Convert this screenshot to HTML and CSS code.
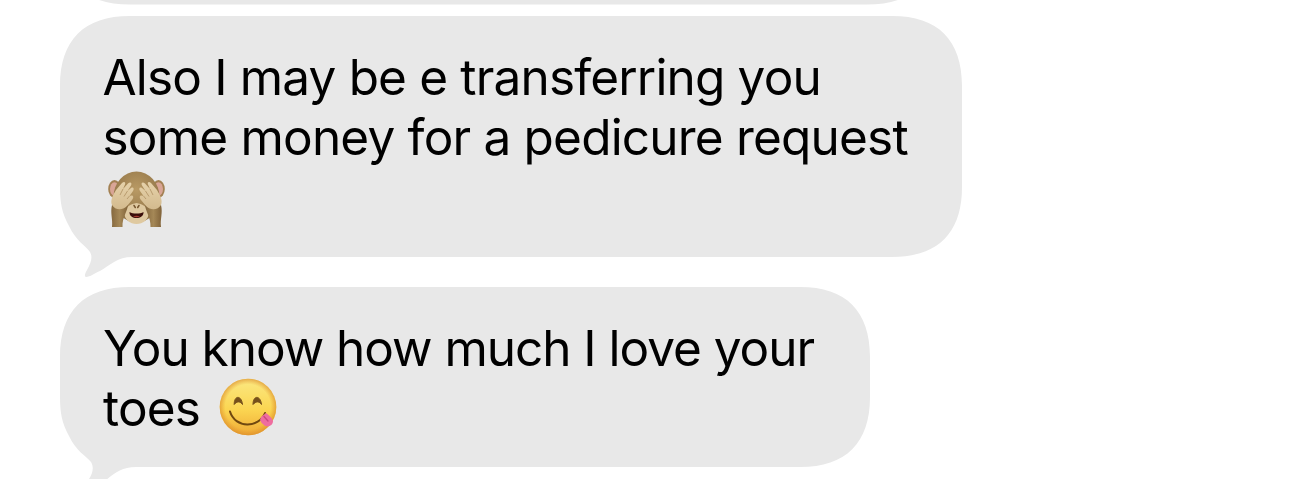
FILE: index.html
```
<!DOCTYPE html>
<html lang="en">
<head>
    <meta charset="utf-8">
    <title>Messages</title>
    <link rel="stylesheet" href="styles.css">
</head>
<body>
    <div class="chat">
        <!-- end of the message above -->
        <div class="bubble previous">
            <svg class="shape" width="877" height="5" viewBox="0 0 877 5">
                <path d="M0 -65 C0 -19 24 4.6 70 4.6 H807 C853 4.6 877 -19 877 -65 Z"/>
            </svg>
        </div>

        <div class="bubble first">
            <svg class="shape" width="902" height="262" viewBox="0 0 902 262">
                <path d="M0 70 C0 24 24 0 70 0 H832 C878 0 902 24 902 70 V171 C902 217 878 241 832 241 H72 C58 241 50 249 40 255 C35 257 30 261 26 261 C24 261 25 257 27 254 C31 247 33 241 30 236 C26 230 16 225 9 210 C2 197 0 187 0 171 Z"/>
            </svg>
            <p class="line one">Also I may be e transferring you</p>
            <p class="line two">some money for a pedicure request</p>
            <p class="line">
                <svg class="monkey" width="58" height="58" viewBox="0 0 58 58">
                    <defs>
                        <radialGradient id="fur" cx="50%" cy="35%" r="65%">
                            <stop offset="0" stop-color="#b99a64"/>
                            <stop offset="1" stop-color="#8d7044"/>
                        </radialGradient>
                        <linearGradient id="hand" x1="0" y1="0" x2="0" y2="1">
                            <stop offset="0" stop-color="#e6d2aa"/>
                            <stop offset="1" stop-color="#d3ba8e"/>
                        </linearGradient>
                        <linearGradient id="arm" x1="0" y1="0" x2="1" y2="0">
                            <stop offset="0" stop-color="#85683e"/>
                            <stop offset=".5" stop-color="#a58857"/>
                            <stop offset="1" stop-color="#806239"/>
                        </linearGradient>
                    </defs>
                    <ellipse cx="6.5" cy="18" rx="6.3" ry="9" fill="#a38153"/>
                    <ellipse cx="6.5" cy="18" rx="4.5" ry="6.8" fill="#d9a596"/>
                    <ellipse cx="50.5" cy="18" rx="6.3" ry="9" fill="#a38153"/>
                    <ellipse cx="50.5" cy="18" rx="4.5" ry="6.8" fill="#d9a596"/>
                    <ellipse cx="28.5" cy="26" rx="23" ry="25.5" fill="url(#fur)"/>
                    <path d="M16 42 C18 35 23 33 28.5 32 C34 33 39 35 41 42 C40 49 35 53 28.5 53 C22 53 17 49 16 42Z" fill="#dfc9a0"/>
                    <path d="M4 56 C5 48 2 42 4 34 L20 33 C20 40 14 46 14.5 56Z" fill="url(#arm)"/>
                    <path d="M53 56 C52 48 55 42 53 34 L37 33 C37 40 43 46 42.5 56Z" fill="url(#arm)"/>
                    <path id="palm" d="M4 34 C2 29 5 24 8 19 L14 12 C16 10 18 11 17 13.5 L15 18 L20 12.5 C22 10.5 24.5 11.5 23 14.5 L19.5 20 L23 17 C25.5 15.5 26.5 18 25 20 L21.5 25 L23.5 24.5 C26 24.5 25.5 27 24 29 L19 35 C14 40 7 39 4 34Z" fill="url(#hand)"/>
                    <use href="#palm" transform="translate(57 0) scale(-1 1)"/>
                    <path d="M12 24 L15 18 M16 25.5 L19.5 20 M19 28 L21.5 25 M45 24 L42 18 M41 25.5 L37.5 20 M38 28 L35.5 25" stroke="#b99c6f" stroke-width="1"/>
                    <path d="M26 34.5 L27.3 36.5 M31 34.5 L29.7 36.5" stroke="#76562e" stroke-width="1.5" stroke-linecap="round"/>
                    <path d="M21.5 41 C25 43 32 43 35.5 41 C36 49 21 49 21.5 41Z" fill="#3b0e0a"/>
                    <path d="M25 45.5 Q28.5 44 32 45.5 Q28.5 47 25 45.5Z" fill="#a63b31"/>
                </svg>
            </p>
        </div>

        <div class="bubble second">
            <svg class="shape" width="810" height="201" viewBox="0 0 810 201">
                <path d="M0 70 C0 24 24 0 70 0 H740 C786 0 810 24 810 70 V110 C810 156 786 180 740 180 H76 C62 180 55 186 46 193 L38 201 H26 L29 192 C33 186 34 180 31 175 C26 169 16 164 9 149 C2 136 0 126 0 110 Z"/>
            </svg>
            <p class="line three">You know how much I love your</p>
            <p class="line four">
                <span>toes</span>
                <svg class="yum" width="58" height="58" viewBox="0 0 58 58">
                    <defs>
                        <linearGradient id="face" x1="0" y1="0" x2="0" y2="1">
                            <stop offset="0" stop-color="#fbe882"/>
                            <stop offset=".55" stop-color="#fbd551"/>
                            <stop offset="1" stop-color="#efaa36"/>
                        </linearGradient>
                        <radialGradient id="edge">
                            <stop offset=".8" stop-color="#e2922b" stop-opacity="0"/>
                            <stop offset="1" stop-color="#d98a2a" stop-opacity=".65"/>
                        </radialGradient>
                    </defs>
                    <circle cx="29" cy="29" r="28.3" fill="url(#face)"/>
                    <circle cx="29" cy="29" r="28.3" fill="url(#edge)"/>
                    <path d="M15.2 26.5 C15 17 22.5 17 23.5 26.5 C21 23 18 23 15.2 26.5Z M34 26.5 C34 17 41.5 17 42.5 26.5 C40 23 37 23 34 26.5Z" fill="#76501b" stroke="#76501b" stroke-linejoin="round"/>
                    <path d="M11 33.5 C16 50.5 40 50.5 46 35" fill="none" stroke="#704810" stroke-width="2" stroke-linecap="round"/>
                    <path d="M42 39 L47 35 C50 37 53 40 54 43 C54 48 48 50 45 47 Q42 45 41 42Z" fill="#ee6d9f"/>
                    <path d="M45 38.5 L49 43" stroke="#cb477e" stroke-width="1.3" stroke-linecap="round"/>
                </svg>
            </p>
        </div>
    </div>
</body>
</html>
```
FILE: styles.css
```
html, body {
    margin: 0;
    height: 479px;
    overflow: hidden;
    background-color: #ffffff;
    font-family: Inter, "Liberation Sans", sans-serif;
    font-size: 49.5px;
    color: #000000;
}

.chat {
    display: flex;
    flex-direction: column;
    align-items: flex-start;
    padding-left: 60px;
}

.bubble {
    position: relative;
    z-index: 0;
    flex-shrink: 0;
    box-sizing: border-box;
}

/* grey background with the tail, sits behind the text */
.shape {
    position: absolute;
    top: 0;
    left: 0;
    z-index: -1;
    fill: #e8e8e8;
}

.previous {
    width: 877px;
    height: 5px;
    margin-bottom: 11px;
}

.first {
    width: 902px;
    height: 241px;
    padding: 31px 0 0 42.5px;
    margin-bottom: 30px;
}

.second {
    width: 810px;
    height: 180px;
    padding: 31px 0 0 43px;
}

.line {
    display: flex;
    height: 60px;
    margin: 0;
    line-height: 60px;
    white-space: nowrap;
    letter-spacing: -0.8px;
}

.one {
    letter-spacing: -0.83px;
}

.three {
    letter-spacing: -1.03px;
}

.four {
    gap: 19px;
}

.monkey {
    margin: 4px 0 0 5px;
}
```
